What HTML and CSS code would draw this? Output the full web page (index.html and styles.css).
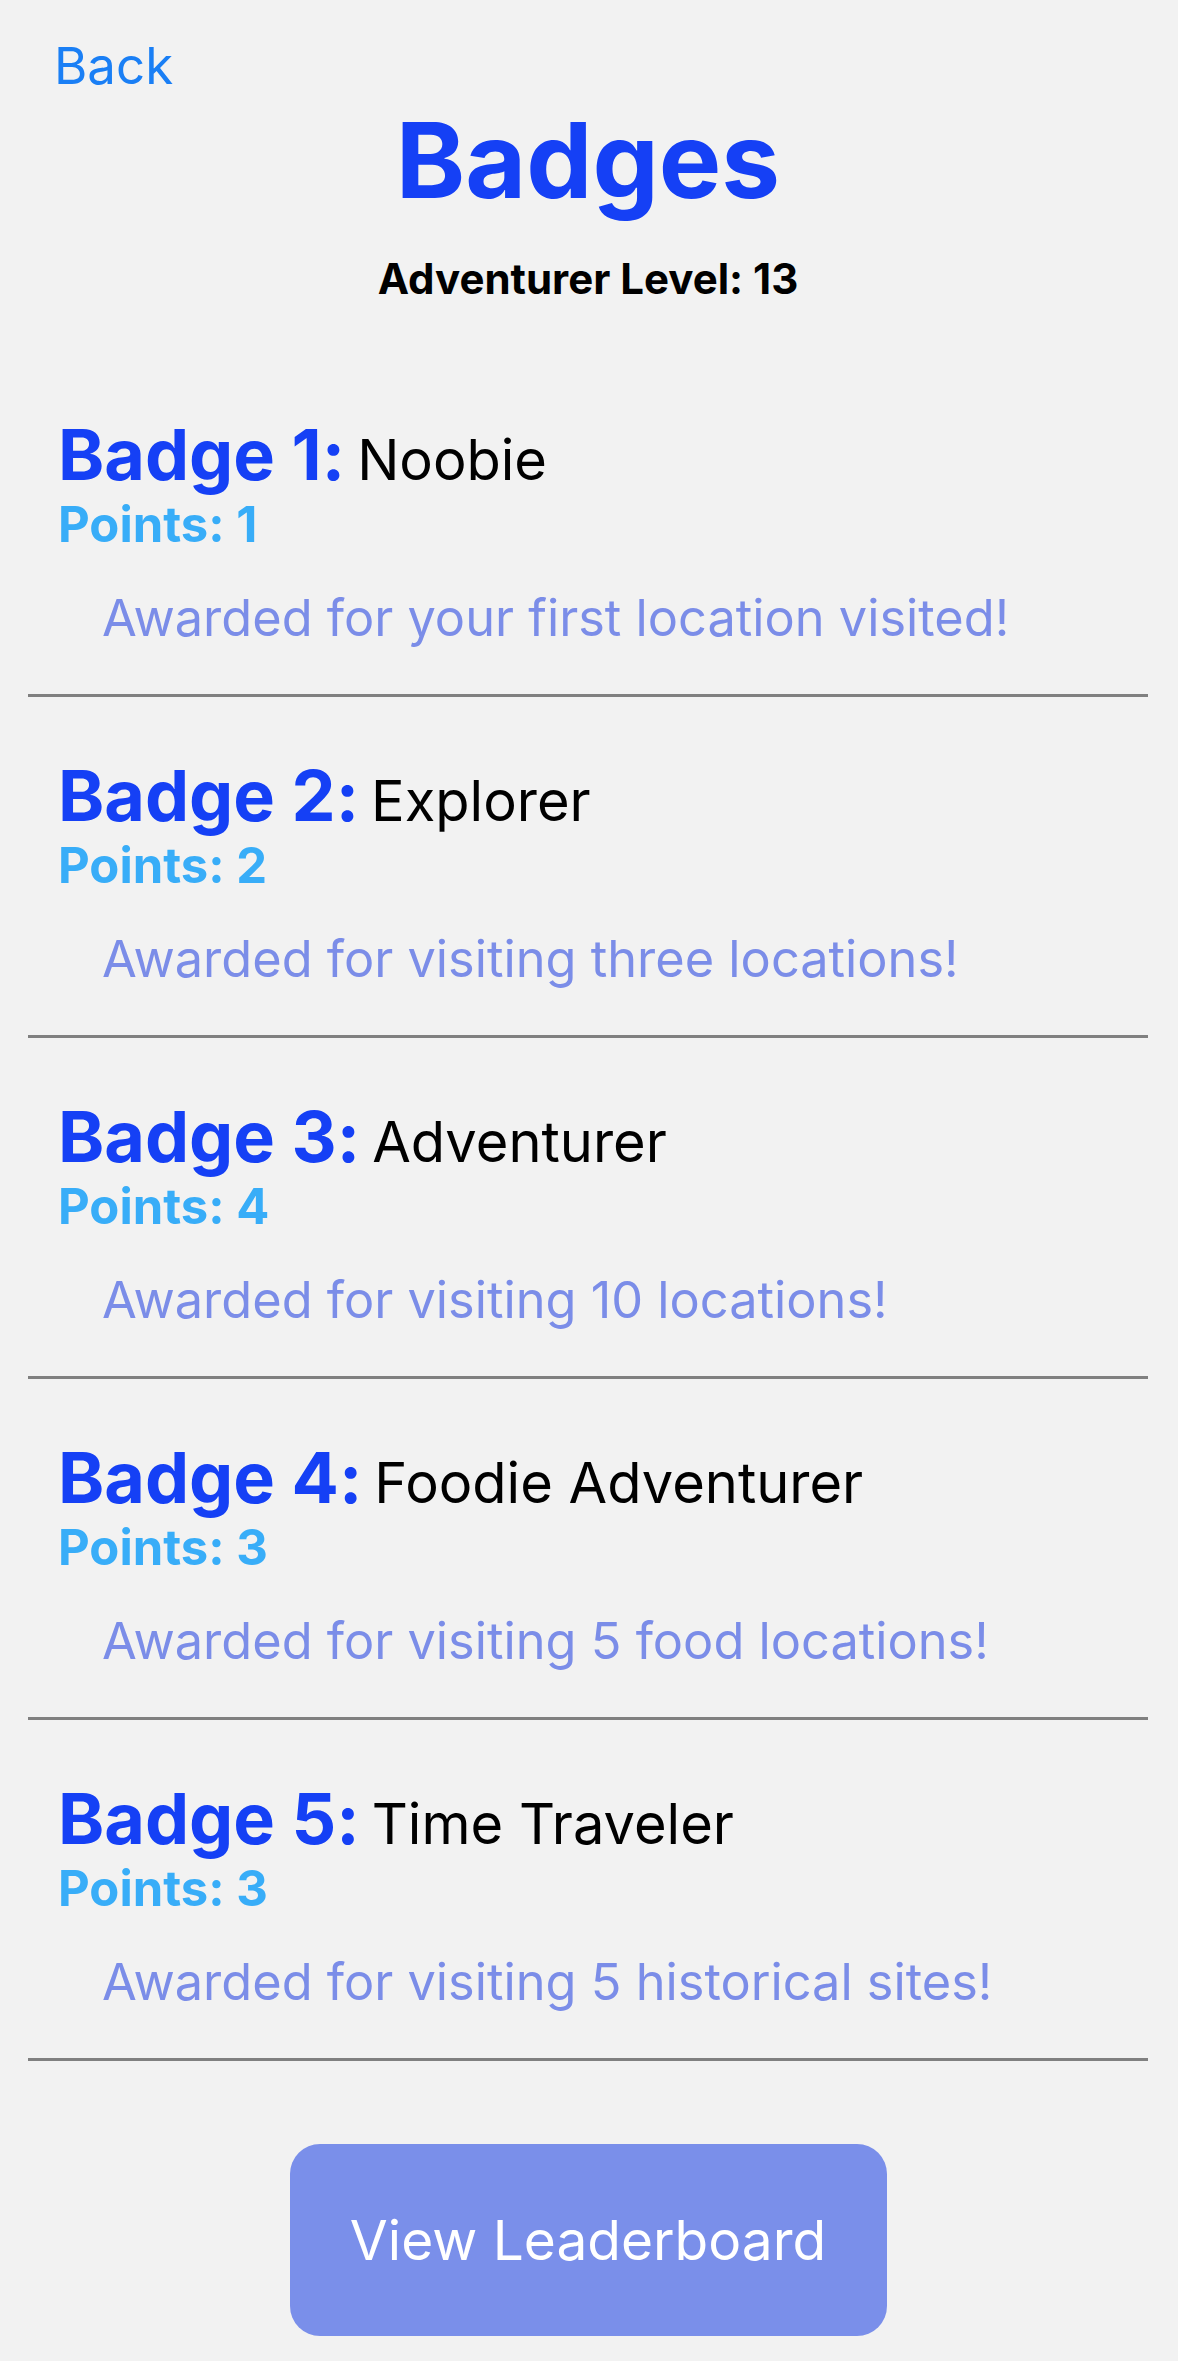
FILE: index.html
```html
<!DOCTYPE html>
<html lang="en">
<head>
<meta charset="utf-8">
<title>Badges</title>
<link rel="stylesheet" href="styles.css">
</head>
<body>
<div class="page">
  <header class="header">
    <a class="back" href="#">Back</a>
    <h1 class="title">Badges</h1>
    <p class="level">Adventurer Level: 13</p>
  </header>
  <ul class="badges">
    <li class="badge">
      <div class="badge-head"><span class="badge-num">Badge 1:</span> <span class="badge-name">Noobie</span></div>
      <div class="points">Points: 1</div>
      <p class="desc">Awarded for your first location visited!</p>
    </li>
    <li class="badge">
      <div class="badge-head"><span class="badge-num">Badge 2:</span> <span class="badge-name">Explorer</span></div>
      <div class="points">Points: 2</div>
      <p class="desc">Awarded for visiting three locations!</p>
    </li>
    <li class="badge">
      <div class="badge-head"><span class="badge-num">Badge 3:</span> <span class="badge-name">Adventurer</span></div>
      <div class="points">Points: 4</div>
      <p class="desc">Awarded for visiting 10 locations!</p>
    </li>
    <li class="badge">
      <div class="badge-head"><span class="badge-num">Badge 4:</span> <span class="badge-name">Foodie Adventurer</span></div>
      <div class="points">Points: 3</div>
      <p class="desc">Awarded for visiting 5 food locations!</p>
    </li>
    <li class="badge">
      <div class="badge-head"><span class="badge-num">Badge 5:</span> <span class="badge-name">Time Traveler</span></div>
      <div class="points">Points: 3</div>
      <p class="desc">Awarded for visiting 5 historical sites!</p>
    </li>
  </ul>
  <div class="actions">
    <button class="leader-btn" type="button">View Leaderboard</button>
  </div>
</div>
</body>
</html>
```

FILE: styles.css
```css
* { box-sizing: border-box; }
html, body {
  margin: 0;
  padding: 0;
  background: #f2f2f2;
}
body {
  font-family: Inter, "Noto Sans", "Liberation Sans", sans-serif;
  font-feature-settings: "calt" 0;
  color: #000;
}
.page {
  padding: 0 30px 0 28px;
  min-height: 2361px;
}
.header {
  display: flex;
  flex-direction: column;
  align-items: center;
}
.back {
  align-self: flex-start;
  margin: 36px 0 0 26px;
  font-size: 51px;
  line-height: 60px;
  color: #1a7ff5;
  text-decoration: none;
}
.title {
  margin: -1px 0 0;
  font-size: 105px;
  line-height: 130px;
  font-weight: 700;
  color: #1540f5;
}
.level {
  margin: 29px 0 0;
  font-size: 42px;
  line-height: 50px;
  font-weight: 700;
}
.badges {
  list-style: none;
  margin: 52px 0 0;
  padding: 0;
}
.badge {
  padding: 59px 0 0 30px;
  border-bottom: 3px solid #808080;
}
.badge-head {
  display: flex;
  align-items: baseline;
  gap: 12px;
  height: 80px;
  white-space: nowrap;
}
.badge-num {
  font-size: 70px;
  line-height: 80px;
  font-weight: 700;
  color: #1540f5;
}
.badge-name {
  font-size: 56px;
  line-height: 70px;
  font-weight: 400;
  color: #000;
}
.points {
  font-size: 49px;
  line-height: 60px;
  font-weight: 700;
  color: #38adf8;
}
.desc {
  margin: 32px 0 0 44px;
  padding-bottom: 45px;
  font-size: 50.5px;
  line-height: 62px;
  color: #7b8de8;
}
.actions {
  display: flex;
  justify-content: center;
  padding-top: 83px;
}
.leader-btn {
  width: 597px;
  height: 192px;
  border: none;
  border-radius: 30px;
  background: #7a8fea;
  color: #fff;
  font-family: inherit;
  font-size: 55px;
  font-weight: 400;
}
```
